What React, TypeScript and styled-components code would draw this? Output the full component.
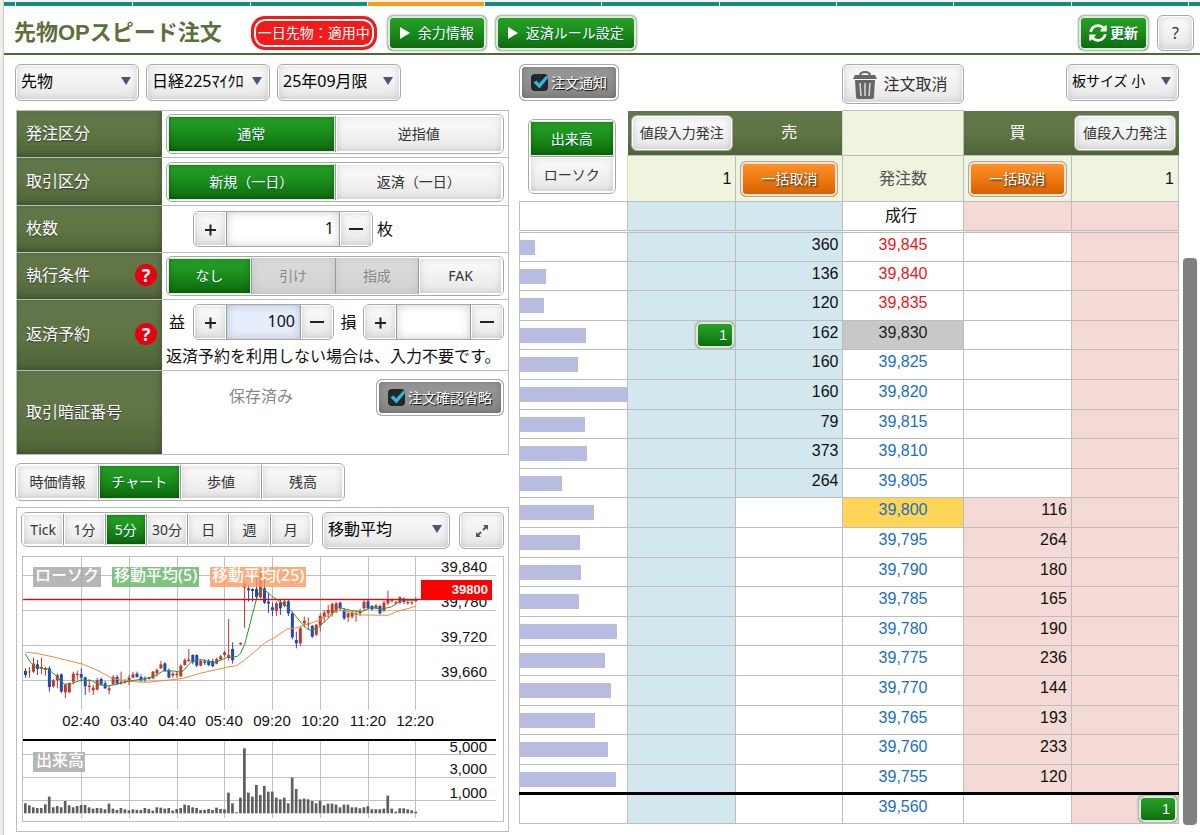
import React, { useState } from "react";
import styled, { createGlobalStyle, css } from "styled-components";
import { FaSyncAlt } from "react-icons/fa";

const line = "#bdbdbd";
const uiFont = `"Noto Sans", "Noto Sans CJK JP", sans-serif`;
const numFont = `"Liberation Sans", "Noto Sans CJK JP", sans-serif`;

const GlobalStyle = createGlobalStyle`
  *, *::before, *::after { box-sizing: border-box; }
  body { margin: 0; background: #efeee6; color: #111; font: 16px/20px ${uiFont}; }
  button, input, select { font: inherit; color: inherit; margin: 0; }
  button { cursor: pointer; }
`;

/* ---------- surfaces ---------- */

const light = css`
  background: linear-gradient(#fdfdfd, #e6e6e6);
  color: #333;
  box-shadow: inset 0 0 0 1px #fff, inset 0 0 8px rgba(0, 0, 0, 0.18);
`;
const green = css`
  background: linear-gradient(#28a428, #1c8f1c 45%, #0b680b);
  color: #fff;
  text-shadow: 0 1px 1px #063;
  box-shadow: inset 0 0 0 1px #dfe8df, inset 0 0 6px rgba(0, 40, 0, 0.5);
`;
const orange = css`
  background: linear-gradient(#ff9430, #f17c12 45%, #d45e00);
  color: #fff;
  text-shadow: 1px 1px 2px #222;
  box-shadow: inset 0 0 0 2px #ffe6cc;
`;
const gray = css`
  background: linear-gradient(#9c9c9c, #858585);
  color: #fff;
  text-shadow: 1px 1px 1px #000;
  box-shadow: inset 0 0 0 2px #fff, inset 0 0 10px rgba(0, 0, 0, 0.35);
`;
const disabled = css`
  background: linear-gradient(#dcdcdc, #d2d2d2);
  color: #888;
  box-shadow: inset 0 0 8px rgba(0, 0, 0, 0.1);
`;
const tones = { light, green, orange, gray, disabled };
type Tone = keyof typeof tones;

const Button = styled.button<{ $tone?: Tone }>`
  display: inline-flex;
  align-items: center;
  justify-content: center;
  gap: 8px;
  height: 36px;
  padding: 0 12px;
  border: 1px solid #a8a8a8;
  border-radius: 6px;
  font-size: 14px;
  line-height: 20px;
  white-space: nowrap;
  ${(p) => tones[p.$tone ?? "light"]}
  ${(p) => p.$tone === "green" && "border-color: #b4c0b4; box-shadow: inset 0 0 0 2px #dfe8df, 0 0 2px #999;"}
`;

/* ---------- page frame ---------- */

const Page = styled.div`
  min-height: 100vh;
  margin-left: 3px;
  border-left: 1px solid #ccc;
  background: #fff;
`;
const TopStrip = styled.div`
  display: flex;
  gap: 1px;
  padding-top: 2px;
  background: #f3f3ee;
`;
const StripItem = styled.span<{ $active?: boolean; $end?: boolean }>`
  flex: ${(p) => (p.$end ? "0 0 11px" : "1 1 0")};
  height: 4px;
  background: ${(p) => (p.$active ? "#ff9a14" : "#128c7c")};
`;
const Header = styled.header`
  display: flex;
  align-items: center;
  height: 49px;
  padding: 6px 6px 0 10px;
  border-bottom: 2px solid #4f6a35;
`;
const Title = styled.h1`
  margin: 0 29px 0 0;
  color: #5b703c;
  font-family: ${numFont};
  font-size: 22px;
  line-height: 32px;
  white-space: nowrap;
`;
const StatusBadge = styled.span`
  margin-right: 10px;
  padding: 5px 4px;
  border: 3px solid #f51a1a;
  border-radius: 14px;
  background: #f51a1a;
  box-shadow: inset 0 0 0 2px #fff;
  color: #fff;
  font-size: 14px;
  line-height: 18px;
  white-space: nowrap;
`;
const HeaderLinks = styled.div`
  display: flex;
  gap: 8px;
`;
const HeaderActions = styled(HeaderLinks)`
  margin-left: auto;
`;
const Play = styled.svg`
  width: 10px;
  height: 12px;
  fill: #fff;
`;
const RefreshButton = styled(Button)`
  gap: 3px;
  padding: 0 10px;
  font-weight: 700;
`;
const HelpButton = styled(Button)`
  width: 37px;
  padding: 0;
  font-size: 16px;
`;

const Main = styled.main`
  display: grid;
  grid-template-columns: minmax(0, 503fr) minmax(0, 664fr) 14px;
  padding: 9px 3px 0 12px;
`;
const LeftColumn = styled.div`
  display: flex;
  flex-direction: column;
  margin-right: 10px;
`;
const RightColumn = styled.div`
  margin-right: 4px;
`;

/* ---------- small controls ---------- */

const SelectBox = styled.div<{ $grow?: boolean }>`
  position: relative;
  flex: ${(p) => (p.$grow ? "1 1 0" : "0 1 124px")};
  &::after {
    content: "";
    position: absolute;
    right: 8px;
    top: 13px;
    border: 5px solid transparent;
    border-top: 8px solid #44597c;
    border-bottom: 0;
    pointer-events: none;
  }
`;
const SelectInput = styled.select`
  appearance: none;
  width: 100%;
  height: 37px;
  padding: 0 16px 3px 5px;
  border: 1px solid #a8a8a8;
  border-radius: 6px;
  font-size: 16px;
  ${light}
  color: #000;
`;
const SmallSelectInput = styled(SelectInput)`
  font-size: 14px;
`;

function Select({ label, value, grow, small }: { label: string; value: string; grow?: boolean; small?: boolean }) {
  const Field = small ? SmallSelectInput : SelectInput;
  return (
    <SelectBox $grow={grow}>
      <Field aria-label={label} defaultValue={value}>
        <option>{value}</option>
      </Field>
    </SelectBox>
  );
}

const CheckLabel = styled.label`
  display: inline-flex;
  align-items: center;
  justify-content: center;
  gap: 3px;
  height: 37px;
  border: 1px solid #a8a8a8;
  border-radius: 6px;
  font-size: 14px;
  white-space: nowrap;
  ${gray}
`;
const CheckMark = styled.span`
  display: grid;
  place-items: center;
  width: 17px;
  height: 17px;
  border-radius: 4px;
  background: #22272b;
  & > * { grid-area: 1 / 1; }
  svg { width: 17px; height: 17px; overflow: visible; visibility: hidden; pointer-events: none; }
  input { appearance: none; width: 17px; height: 17px; }
  input:checked + svg { visibility: visible; }
`;

function CheckButton({ children }: { children: React.ReactNode }) {
  return (
    <CheckLabel>
      <CheckMark>
        <input type="checkbox" defaultChecked />
        <svg viewBox="0 0 17 17" aria-hidden>
          <path d="M2.500 8.500 5.500 6.500 8 9.500 15.500 1.500 17.500 3.500 8.500 14.500Z" fill="#35b6d6" />
        </svg>
      </CheckMark>
      {children}
    </CheckLabel>
  );
}

const SegmentGroup = styled.div<{ $vertical?: boolean; $height?: number }>`
  display: flex;
  flex-direction: ${(p) => (p.$vertical ? "column" : "row")};
  flex: 1;
  height: ${(p) => p.$height ?? 38}px;
  padding: 1px;
  border: 1px solid #a8a8a8;
  border-radius: 6px;
  background: #fff;
  overflow: hidden;
`;
const Segment = styled.button<{ $tone: Tone }>`
  flex: 1 1 0;
  padding: 0;
  border: 0 solid #999;
  font-size: 14px;
  line-height: 20px;
  white-space: nowrap;
  ${(p) => tones[p.$tone]}
  & + & { border-left-width: 1px; }
`;
const StackedSegment = styled(Segment)`
  & + & { border-left-width: 0; border-top-width: 1px; }
`;

function Segments({ items, initial, off = [], height, vertical }: {
  items: string[]; initial: number; off?: number[]; height?: number; vertical?: boolean;
}) {
  const [active, setActive] = useState(initial);
  const Item = vertical ? StackedSegment : Segment;
  return (
    <SegmentGroup $height={height} $vertical={vertical}>
      {items.map((text, i) => (
        <Item
          key={text}
          type="button"
          aria-pressed={i === active}
          disabled={off.includes(i)}
          $tone={i === active ? "green" : off.includes(i) ? "disabled" : "light"}
          onClick={() => setActive(i)}
        >
          {text}
        </Item>
      ))}
    </SegmentGroup>
  );
}

const StepperBox = styled.div<{ $width: number }>`
  display: flex;
  flex: 0 1 ${(p) => p.$width}px;
  height: 36px;
  border: 1px solid #a8a8a8;
  border-radius: 6px;
  overflow: hidden;
`;
const StepButton = styled.button`
  display: grid;
  place-items: center;
  flex: 0 0 32px;
  padding: 0;
  border: 0;
  ${light}
  svg { width: 16px; height: 16px; stroke: #222; stroke-width: 2; }
`;
const StepInput = styled.input<{ $filled?: boolean }>`
  flex: 1;
  min-width: 0;
  padding: 0 5px 2px;
  border: 0 solid #999;
  border-width: 0 1px;
  background: ${(p) => (p.$filled ? "#e6edfc" : "#fff")};
  box-shadow: inset 0 0 10px rgba(0, 0, 0, 0.2);
  color: #111;
  font-size: 16px;
  text-align: right;
`;

function Stepper({ label, value, width, filled }: { label: string; value: string; width: number; filled?: boolean }) {
  return (
    <StepperBox $width={width}>
      <StepButton type="button" aria-label={`${label}を増やす`}>
        <svg viewBox="0 0 16 16"><path d="M3 9h11M8.500 3.500v11" /></svg>
      </StepButton>
      <StepInput aria-label={label} defaultValue={value} $filled={filled} />
      <StepButton type="button" aria-label={`${label}を減らす`}>
        <svg viewBox="0 0 16 16"><path d="M1 8h14" /></svg>
      </StepButton>
    </StepperBox>
  );
}

/* ---------- order form ---------- */

const Toolbar = styled.div`
  display: flex;
  gap: 7px;
  height: 46px;
  margin-left: -1px;
`;
const Form = styled.form`
  border: 1px solid ${line};
  border-bottom-width: 0;
`;
const FormRow = styled.div<{ $height: number }>`
  display: grid;
  grid-template-columns: 145px minmax(0, 1fr);
  min-height: ${(p) => p.$height}px;
  border-bottom: 1px solid ${line};
`;
const FormLabel = styled.div`
  display: flex;
  align-items: center;
  justify-content: space-between;
  padding: 0 5px 2px 9px;
  background: linear-gradient(#61774a, #5f7543 50%, #4f6438);
  box-shadow: inset -2px -2px 6px rgba(0, 0, 0, 0.2);
  color: #fff;
  text-shadow: 0 1px 1px #333;
`;
const FormField = styled.div`
  display: flex;
  align-items: center;
  padding: 0 4px;
`;
const QuantityField = styled(FormField)`
  gap: 4px;
  padding: 0 31px;
`;
const SettleField = styled.div`
  padding: 4px;
`;
const SettleInputs = styled.div`
  display: flex;
  align-items: center;
`;
const SettleLabel = styled.span`
  flex: 0 0 27px;
  padding-left: 3px;
`;
const LossLabel = styled.span`
  flex: 1 0 16px;
  text-align: center;
`;
const Note = styled.p`
  margin: 6px 0 0;
  white-space: nowrap;
`;
const PinField = styled(FormField)`
  align-items: flex-start;
  justify-content: flex-end;
  gap: 83px;
  padding-top: 8px;
  & > label { width: 128px; }
`;
const Saved = styled.span`
  padding-top: 7px;
  color: #888;
`;
const Help = styled.button`
  width: 22px;
  height: 22px;
  padding: 0;
  border: 0;
  border-radius: 50%;
  background: #e60012;
  color: #fff;
  font-size: 18px;
  font-weight: 700;
  line-height: 22px;
`;

function OrderForm() {
  return (
    <Form>
      <FormRow $height={47}>
        <FormLabel>発注区分</FormLabel>
        <FormField><Segments items={["通常", "逆指値"]} initial={0} height={40} /></FormField>
      </FormRow>
      <FormRow $height={48}>
        <FormLabel>取引区分</FormLabel>
        <FormField><Segments items={["新規（一日）", "返済（一日）"]} initial={0} height={40} /></FormField>
      </FormRow>
      <FormRow $height={47}>
        <FormLabel>枚数</FormLabel>
        <QuantityField><Stepper label="枚数" value="1" width={180} />枚</QuantityField>
      </FormRow>
      <FormRow $height={47}>
        <FormLabel>執行条件<Help type="button">?</Help></FormLabel>
        <FormField><Segments items={["なし", "引け", "指成", "FAK"]} initial={0} off={[1, 2]} height={40} /></FormField>
      </FormRow>
      <FormRow $height={71}>
        <FormLabel>返済予約<Help type="button">?</Help></FormLabel>
        <SettleField>
          <SettleInputs>
            <SettleLabel>益</SettleLabel>
            <Stepper label="益" value="100" width={141} filled />
            <LossLabel>損</LossLabel>
            <Stepper label="損" value="" width={141} />
          </SettleInputs>
          <Note>返済予約を利用しない場合は、入力不要です。</Note>
        </SettleField>
      </FormRow>
      <FormRow $height={84}>
        <FormLabel>取引暗証番号</FormLabel>
        <PinField><Saved>保存済み</Saved><CheckButton>注文確認省略</CheckButton></PinField>
      </FormRow>
    </Form>
  );
}

/* ---------- chart ---------- */

const Tabs = styled.div`
  display: flex;
  width: 67%;
  margin: 8px 0 6px -1px;
`;
const ChartPanel = styled.section`
  padding: 4px 4px 9px;
  border: 1px solid ${line};
`;
const ChartTools = styled.div`
  display: flex;
  gap: 9px;
  height: 44px;
  & > :first-child { flex: 0 1 292px; }
`;
const ExpandButton = styled(Button)`
  width: 45px;
  height: 37px;
  padding: 0;
`;
const ChartSvg = styled.svg`
  display: block;
  width: calc(100% - 1px);
  height: auto;
  margin-left: 1px;
  outline: 1px solid ${line};
  outline-offset: -1px;
  font-family: ${numFont};
  font-size: 15px;
`;

/* Each candle: direction, high, body top, body bottom, low. */
type Candle = [0 | 1, number, number, number, number] | null;
const candles: Candle[] = [
  [0, 640, 648, 660, 668], [1, 636, 650, 652, 668], [1, 608, 626, 650, 654], [0, 615, 628, 642, 660], [1, 608, 636, 640, 658],
  [1, 636, 640, 645, 662], [0, 634, 640, 696, 710], [1, 672, 676, 694, 698], [1, 655, 660, 676, 700], [0, 655, 658, 710, 714],
  [1, 685, 690, 712, 730], [1, 682, 685, 712, 714], [1, 650, 656, 680, 688], [1, 648, 656, 660, 675], [0, 640, 657, 668, 680],
  [0, 665, 667, 694, 720], [1, 672, 692, 696, 712], [1, 690, 698, 706, 720], [1, 668, 675, 704, 706], [0, 668, 672, 688, 692],
  [0, 678, 685, 700, 702], [1, 690, 700, 706, 718], [1, 660, 666, 688, 690], [0, 660, 666, 686, 690], [1, 650, 680, 684, 690],
  [1, 672, 677, 682, 686], [1, 660, 668, 680, 690], [1, 650, 658, 668, 670], [0, 650, 656, 666, 668], [0, 658, 666, 676, 682],
  [0, 664, 670, 674, 682], [1, 666, 668, 672, 674], [1, 648, 650, 670, 672], [1, 640, 645, 655, 665], [1, 618, 628, 640, 642],
  [0, 622, 625, 648, 650], [0, 640, 645, 668, 670], [1, 650, 656, 662, 668], [1, 650, 656, 660, 668], [1, 628, 632, 664, 666],
  [1, 610, 615, 630, 632], [1, 582, 614, 618, 622], [0, 598, 600, 622, 628], [0, 598, 600, 632, 636], [1, 612, 618, 632, 634],
  [0, 612, 620, 624, 630], [0, 612, 618, 630, 634], [0, 612, 618, 634, 636], [1, 608, 612, 626, 628], [1, 600, 604, 612, 616],
  [1, 588, 592, 600, 606], [1, 492, 600, 608, 616], [0, 562, 582, 616, 626], null, [1, 562, 564, 568, 570],
  [1, 380, 388, 398, 518], [0, 390, 400, 406, 440], [0, 400, 402, 408, 440], [0, 370, 402, 426, 432], [1, 343, 355, 427, 430],
  [0, 365, 400, 443, 447], [0, 413, 440, 446, 473], [0, 443, 457, 465, 483], [1, 440, 445, 467, 483], [0, 435, 443, 460, 480],
  [1, 433, 439, 453, 457], [0, 433, 439, 475, 483], [0, 470, 475, 547, 553], [0, 530, 555, 565, 580], [1, 515, 520, 565, 573],
  [1, 485, 497, 505, 517], [1, 487, 505, 509, 525], [0, 510, 513, 545, 549], [1, 507, 509, 539, 543], [1, 475, 483, 511, 529],
  [1, 465, 473, 485, 503], [1, 450, 465, 475, 490], [1, 443, 447, 475, 485], [1, 440, 445, 470, 475], [0, 440, 443, 460, 465],
  [0, 460, 465, 490, 495], [1, 470, 475, 487, 501], [1, 465, 473, 485, 491], [1, 467, 475, 479, 501], [1, 461, 469, 475, 483],
  [1, 435, 441, 460, 465], [0, 435, 439, 459, 463], [0, 450, 453, 463, 467], [1, 447, 451, 459, 463], [0, 449, 453, 475, 479],
  [1, 437, 443, 467, 471], [1, 407, 433, 445, 451], [1, 433, 436, 439, 443], [1, 437, 442, 445, 449], [1, 423, 427, 443, 447],
  [0, 427, 431, 441, 447], [1, 435, 441, 445, 449], [1, 437, 442, 445, 449], [1, 427, 435, 439, 441],
];
const volumes = [
  30, 24, 18, 16, 16, 27, 50, 18, 22, 18, 37, 24, 18, 22, 25, 25, 18, 14, 16, 15, 12, 29, 14, 10, 16, 12, 9, 12, 10, 10,
  16, 13, 8, 18, 17, 14, 16, 8, 13, 16, 26, 24, 18, 16, 10, 10, 13, 10, 17, 13, 12, 62, 30, 3, 47, 195, 62, 50, 85, 55,
  82, 65, 65, 47, 42, 47, 30, 107, 73, 42, 44, 42, 37, 30, 38, 24, 29, 29, 26, 18, 26, 26, 18, 18, 15, 18, 21, 12, 12, 12,
  14, 53, 14, 5, 15, 15, 12, 9, 5,
];
const ma5 =
  "76,597 90,620 105,635 125,640 145,642 165,660 193,688 215,686 245,675 275,677 300,690 325,693 350,688 390,678 430,672 460,665 490,648 520,648 545,652 560,636 575,620 600,614 645,622 680,608 712,604 722,595 735,565 770,430 783,400 797,407 815,423 835,437 860,453 880,475 905,505 920,520 932,526 955,517 985,490 1015,457 1055,467 1085,470 1115,457 1145,463 1175,455 1205,435 1248,436";
const ma25 =
  "76,592 110,595 160,606 250,628 290,645 340,672 400,680 440,682 500,676 545,671 600,655 680,637 710,632 730,618 770,585 795,563 825,547 860,523 895,517 955,497 1015,465 1045,470 1085,480 1165,481 1190,470 1248,454";
const times = ["02:40", "03:40", "04:40", "05:40", "09:20", "10:20", "11:20", "12:20"];
const gridX = times.map((_, i) => Math.round(59 + i * 47.75));
const candleX = (i: number) => 76 + i * 11.95;

function PriceChart() {
  return (
    <ChartSvg viewBox="0 0 482 266" role="img" aria-label="5分足チャート">
      <g stroke="#c0c0c0">
        {gridX.map((x) => <path key={x} d={`M${x + 0.5} 0V154M${x + 0.5} 185V262`} />)}
        {[19.5, 54.5, 89.5, 124.5, 198.5, 221.5, 244.5].map((y) => <path key={y} d={`M0 ${y}H474`} />)}
      </g>
      <path d="M0 184H474" stroke="#000" strokeWidth="2" />
      <g transform="translate(-22 -101) scale(0.3333)">
        {candles.map((c, i) =>
          c && (
            <g key={i} fill={c[0] ? "#c0392b" : "#2447b8"}>
              <rect x={candleX(i) - 1} y={c[1]} width="3" height={c[4] - c[1]} />
              <rect x={candleX(i) - 4} y={c[2]} width="9" height={c[3] - c[2]} />
            </g>
          )
        )}
        {volumes.map((v, i) => <rect key={i} x={candleX(i) - 4} y={1075 - v} width="8" height={v} fill="#5e5e5e" />)}
        <g fill="none" strokeWidth="3" strokeLinejoin="round">
          <polyline points={ma25} stroke="#f08a3c" />
          <polyline points={ma5} stroke="#2a962a" />
        </g>
      </g>
      <rect x="0" y="42.800" width="400" height="1.400" fill="#dc0a0a" />
      <g fillOpacity="0.82">
        <rect x="11" y="11" width="68" height="20" fill="#a6a6a6" />
        <rect x="90" y="11" width="87" height="20" fill="#64b464" />
        <rect x="188" y="11" width="96" height="20" fill="#fd9a60" />
        <rect x="11" y="196" width="52" height="20" fill="#a6a6a6" />
      </g>
      <g fill="#fff" fontSize="16" fontFamily={uiFont} fontWeight="500">
        <text x="13" y="25">ローソク</text>
        <text x="92" y="25">移動平均(5)</text>
        <text x="190" y="25">移動平均(25)</text>
        <text x="14" y="210">出来高</text>
      </g>
      <g fill="#111" textAnchor="end">
        <text x="465" y="16">39,840</text>
        <text x="465" y="51">39,780</text>
        <text x="465" y="86">39,720</text>
        <text x="465" y="121">39,660</text>
        <text x="465" y="196">5,000</text>
        <text x="465" y="218">3,000</text>
        <text x="465" y="242">1,000</text>
      </g>
      <g fill="#111" textAnchor="middle">
        {times.map((t, i) => <text key={t} x={gridX[i]} y="170">{t}</text>)}
      </g>
      <rect x="399" y="24" width="71" height="20" fill="#f00" />
      <text x="466" y="38" fill="#fff" fontSize="13" fontWeight="700" textAnchor="end">39800</text>
    </ChartSvg>
  );
}

/* ---------- price ladder ---------- */

const LadderToolbar = styled.div`
  display: grid;
  grid-template-columns: 109fr 214fr 122fr 102fr 113fr;
  align-items: start;
  height: 46px;
  & > :first-child { margin-right: 9px; }
`;
const CancelButton = styled(Button)`
  gap: 6px;
  height: 40px;
  padding: 0 5px 0 0;
  font-size: 16px;
  svg { width: 24px; height: 29px; }
`;
const LadderTable = styled.table`
  width: 100%;
  table-layout: fixed;
  border-collapse: collapse;
  font-family: ${numFont};
  td, th { padding: 0; font-weight: 400; }
`;
const LadderCol = styled.col<{ $width: number }>`
  width: ${(p) => p.$width}px;
`;
const HeadRow = styled.tr<{ $height: number }>`
  height: ${(p) => p.$height}px;
`;
const ToggleCell = styled.th`
  && { padding: 2px 11px 0 8px; }
`;
const SideHead = styled.th`
  background: linear-gradient(#61774a, #5f7543 50%, #4f6438);
  color: #fff;
  & > button { width: calc(100% - 6px); padding: 0; font-family: ${uiFont}; }
`;
const PaleHead = styled.th<{ $right?: boolean }>`
  && {
    padding: 0 4px;
    border: 1px solid ${line};
    border-left-color: #d5dcc8;
    text-align: ${(p) => (p.$right ? "right" : "center")};
  }
  background: #eef4de;
  color: ${(p) => (p.$right ? "#111" : "#555")};
  & > button { width: 100%; padding: 0; font-family: ${uiFont}; }
`;
const Rows = styled.tbody`
  tr { height: 30px; }
  tr:nth-child(5n + 3), tr:nth-child(5n) { height: 29px; }
`;
const cellColors = { white: "#fff", sell: "#d3e7ef", buy: "#f4d9d5", mark: "#c8c8c8", last: "#ffd557" };
const Cell = styled.td<{ $bg?: keyof typeof cellColors }>`
  border: 1px solid ${line};
  background: ${(p) => cellColors[p.$bg ?? "white"]};
  vertical-align: top;
`;
const NumberCell = styled(Cell)`
  && { padding: 2px 4px 0 0; line-height: 20px; text-align: right; }
`;
const PriceCell = styled(Cell)<{ $color: string }>`
  && { padding-top: 2px; line-height: 20px; text-align: center; }
  color: ${(p) => p.$color};
`;
const MarketCell = styled(PriceCell)`
  && { padding-right: 4px; line-height: 24px; }
`;
const MarketRow = styled.tr`
  td { border-bottom: 3px double ${line}; }
`;
const OutsideRow = styled.tr`
  td { border-top: 3px solid #000; }
`;
const VolumeCell = styled(Cell)`
  && { padding-top: 7px; }
`;
const VolumeBar = styled.div`
  height: 15px;
  background: #b7bce0;
`;
const OrderButton = styled(Button)`
  display: flex;
  justify-content: flex-end;
  width: 40px;
  height: 28px;
  margin-left: auto;
  padding: 0 7px;
  font-size: 15px;
`;
const ScrollTrack = styled.div`
  padding-top: 194px;
`;
const ScrollThumb = styled.div`
  height: 567px;
  border-radius: 4px;
  background: #808080;
`;

const rows: { price: number; bar: number; sell?: number; buy?: number }[] = [
  { price: 39845, bar: 15, sell: 360 }, { price: 39840, bar: 26, sell: 136 }, { price: 39835, bar: 24, sell: 120 },
  { price: 39830, bar: 67, sell: 162 }, { price: 39825, bar: 59, sell: 160 }, { price: 39820, bar: 109, sell: 160 },
  { price: 39815, bar: 66, sell: 79 }, { price: 39810, bar: 68, sell: 373 }, { price: 39805, bar: 43, sell: 264 },
  { price: 39800, bar: 75, buy: 116 }, { price: 39795, bar: 61, buy: 264 }, { price: 39790, bar: 62, buy: 180 },
  { price: 39785, bar: 60, buy: 165 }, { price: 39780, bar: 99, buy: 190 }, { price: 39775, bar: 86, buy: 236 },
  { price: 39770, bar: 93, buy: 144 }, { price: 39765, bar: 76, buy: 193 }, { price: 39760, bar: 90, buy: 233 },
  { price: 39755, bar: 98, buy: 120 },
];
const priceColor = (p: number) => (p > 39830 ? "#e8181c" : p === 39830 ? "#222" : "#1b6fc2");
const priceBg = (p: number) => (p === 39830 ? "mark" : p === 39800 ? "last" : "white");

function Ladder() {
  return (
    <LadderTable>
      <colgroup>
        {[108, 108, 107, 120, 108, 107].map((w, i) => <LadderCol key={i} $width={w} />)}
      </colgroup>
      <thead>
        <HeadRow $height={45}>
          <ToggleCell rowSpan={2}>
            <Segments vertical height={75} items={["出来高", "ローソク"]} initial={0} />
          </ToggleCell>
          <SideHead><Button type="button">値段入力発注</Button></SideHead>
          <SideHead scope="col">売</SideHead>
          <PaleHead />
          <SideHead scope="col">買</SideHead>
          <SideHead><Button type="button">値段入力発注</Button></SideHead>
        </HeadRow>
        <HeadRow $height={46}>
          <PaleHead $right>1</PaleHead>
          <PaleHead><Button type="button" $tone="orange">一括取消</Button></PaleHead>
          <PaleHead scope="col">発注数</PaleHead>
          <PaleHead><Button type="button" $tone="orange">一括取消</Button></PaleHead>
          <PaleHead $right>1</PaleHead>
        </HeadRow>
      </thead>
      <Rows>
        <MarketRow>
          <Cell /><Cell $bg="sell" /><Cell $bg="sell" />
          <MarketCell $color="#111">成行</MarketCell>
          <Cell $bg="buy" /><Cell $bg="buy" />
        </MarketRow>
        {rows.map((r) => (
          <tr key={r.price}>
            <VolumeCell><VolumeBar style={{ width: `${(r.bar / 109) * 100}%` }} /></VolumeCell>
            <Cell $bg="sell">
              {r.price === 39830 && <OrderButton type="button" $tone="green">1</OrderButton>}
            </Cell>
            <NumberCell $bg={r.sell ? "sell" : "white"}>{r.sell}</NumberCell>
            <PriceCell $color={priceColor(r.price)} $bg={priceBg(r.price)}>{r.price.toLocaleString("en-US")}</PriceCell>
            <NumberCell $bg={r.buy ? "buy" : "white"}>{r.buy}</NumberCell>
            <Cell $bg="buy" />
          </tr>
        ))}
        <OutsideRow>
          <Cell /><Cell $bg="sell" /><Cell />
          <PriceCell $color="#1b6fc2">39,560</PriceCell>
          <Cell />
          <Cell $bg="buy"><OrderButton type="button" $tone="green">1</OrderButton></Cell>
        </OutsideRow>
      </Rows>
    </LadderTable>
  );
}

function PlayIcon() {
  return <Play viewBox="0 0 10 12" aria-hidden><path d="M0 0 10 6 0 12Z" /></Play>;
}

export default function App() {
  return (
    <>
      <GlobalStyle />
      <Page>
        <TopStrip>
          <StripItem $end />
          {Array.from({ length: 10 }, (_, i) => <StripItem key={i} $active={i === 3} />)}
          <StripItem $end />
        </TopStrip>
        <Header>
          <Title>先物OPスピード注文</Title>
          <StatusBadge>一日先物：適用中</StatusBadge>
          <HeaderLinks>
            <Button type="button" $tone="green"><PlayIcon />余力情報</Button>
            <Button type="button" $tone="green"><PlayIcon />返済ルール設定</Button>
          </HeaderLinks>
          <HeaderActions>
            <RefreshButton type="button" $tone="green"><FaSyncAlt size={18} />更新</RefreshButton>
            <HelpButton type="button">?</HelpButton>
          </HeaderActions>
        </Header>
        <Main>
          <LeftColumn>
            <Toolbar>
              <Select label="商品" value="先物" />
              <Select label="銘柄" value="日経225ﾏｲｸﾛ" />
              <Select label="限月" value="25年09月限" />
            </Toolbar>
            <OrderForm />
            <Tabs><Segments items={["時価情報", "チャート", "歩値", "残高"]} initial={1} /></Tabs>
            <ChartPanel>
              <ChartTools>
                <Segments items={["Tick", "1分", "5分", "30分", "日", "週", "月"]} initial={2} height={35} />
                <Select grow label="指標" value="移動平均" />
                <ExpandButton type="button" aria-label="拡大">
                  <svg width="14" height="14" viewBox="0 0 14 14" fill="#555" stroke="#555">
                    <path d="M8 6 12 2M6 8 2 12" strokeWidth="2" />
                    <path d="M8 1H13V6ZM1 8V13H6Z" stroke="none" />
                  </svg>
                </ExpandButton>
              </ChartTools>
              <PriceChart />
            </ChartPanel>
          </LeftColumn>
          <RightColumn>
            <LadderToolbar>
              <CheckButton>注文通知</CheckButton>
              <span />
              <CancelButton type="button">
                <svg viewBox="0 0 24 29" aria-hidden>
                  <path d="M7 5C8 1 16 1 17 5" fill="none" stroke="#666" strokeWidth="2" />
                  <path d="M2 5H22L24 9H0Z" fill="#666" />
                  <path d="M2 10H22L21 27Q21 29 18 29H6Q3 29 3 27Z" fill="#666" />
                  <path d="M7 13 8 26M12 13V26M17 13 16 26" stroke="#ddd" strokeWidth="1.500" />
                </svg>
                注文取消
              </CancelButton>
              <span />
              <Select small label="板サイズ" value="板サイズ 小" />
            </LadderToolbar>
            <Ladder />
          </RightColumn>
          <ScrollTrack><ScrollThumb /></ScrollTrack>
        </Main>
      </Page>
    </>
  );
}
